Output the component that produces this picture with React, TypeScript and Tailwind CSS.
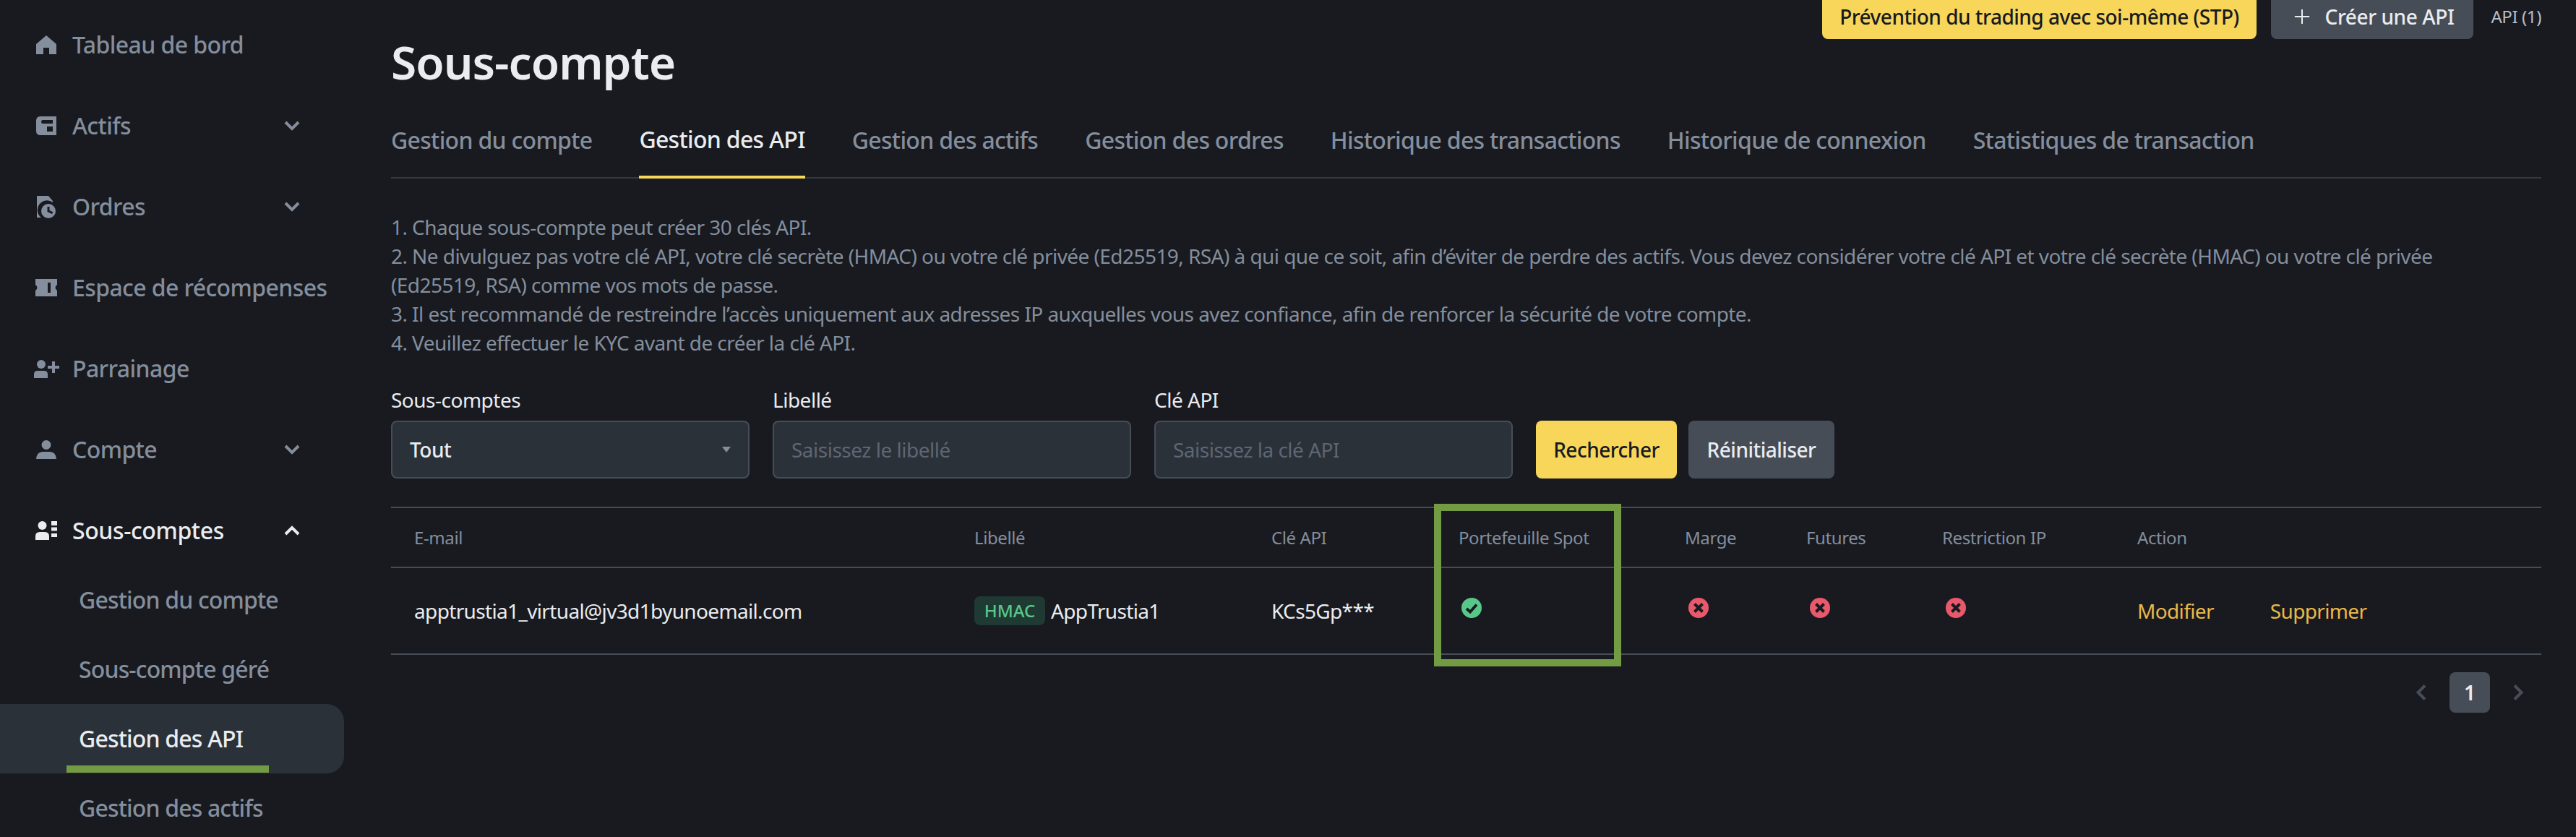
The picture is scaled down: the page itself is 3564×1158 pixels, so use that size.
import React from "react";
import { Plus } from "lucide-react";

const font = "font-['Noto_Sans',sans-serif]";

function HomeIcon() {
  return (
    <svg viewBox="0 0 28 26" className="w-7 h-[26px]" fill="currentColor">
      <path d="M14 0 L28 12 V26 H18 V17 H10 V26 H0 V12 Z" />
    </svg>
  );
}

function WalletIcon() {
  return (
    <svg viewBox="0 0 28 26" className="w-7 h-[26px]" fill="currentColor">
      <path
        fillRule="evenodd"
        d="M6 0 H28 V26 H6 Q0 26 0 20 V6 Q0 0 6 0 Z M9 5 Q7 5 7 7.5 Q7 10 9 10 H23 V5 Z M15 14 V21 H23 V14 Z"
      />
    </svg>
  );
}

function OrdersIcon() {
  return (
    <svg viewBox="0 0 27 31" className="w-[27px] h-[31px]" fill="currentColor">
      <path d="M0 0 H16 L22 7 V9 A13 13 0 0 0 6 30 H0 Z" />
      <path
        fillRule="evenodd"
        d="M16 11 A10 10 0 1 1 16 31 A10 10 0 0 1 16 11 Z M14.5 15 V22 L21 25 L22.5 22.5 L17.5 20 V15 Z"
      />
    </svg>
  );
}

function TicketIcon() {
  return (
    <svg viewBox="0 0 30 24" className="w-[30px] h-6" fill="currentColor">
      <path
        fillRule="evenodd"
        d="M0 0 H30 V8 A4.5 4.5 0 0 0 30 16 V24 H0 V16 A4.5 4.5 0 0 0 0 8 Z M17 5 V19 H21 V5 Z"
      />
    </svg>
  );
}

function ReferralIcon() {
  return (
    <svg viewBox="0 0 35 25" className="w-[35px] h-[25px]" fill="currentColor">
      <circle cx="10" cy="6" r="6" />
      <path d="M0 25 V20 Q0 15 5 15 H14 Q19 15 19 20 V25 Z" />
      <path d="M25 2 H29 V8 H35 V12 H29 V18 H25 V12 H19 V8 H25 Z" />
    </svg>
  );
}

function UserIcon() {
  return (
    <svg viewBox="0 0 28 26" className="w-7 h-[26px]" fill="currentColor">
      <circle cx="14" cy="6.5" r="6.5" />
      <path d="M0 26 Q1 16 9 16 H19 Q27 16 28 26 Z" />
    </svg>
  );
}

function SubAccountIcon() {
  return (
    <svg viewBox="0 0 30 26" className="w-[30px] h-[26px]" fill="currentColor">
      <circle cx="9.5" cy="6" r="6" />
      <path d="M0 26 V21 Q0 15 6 15 H13 Q19 15 19 21 V26 Z" />
      <path d="M22 0 H30 V6 H22 Z M22 8.5 H30 V13.5 H22 Z M22 17 H30 V22 H22 Z" />
    </svg>
  );
}

function Chevron({ up = false }: { up?: boolean }) {
  return (
    <svg viewBox="0 0 22 14" className="w-[22px] h-[14px]" fill="none" stroke="currentColor" strokeWidth="4">
      <path d={up ? "M2 12 L11 3 L20 12" : "M2 2 L11 11 L20 2"} />
    </svg>
  );
}

function CheckBadge() {
  return (
    <svg viewBox="0 0 28 28" className="w-7 h-7">
      <circle cx="14" cy="14" r="14" fill="#58c88a" />
      <path d="M7 15 L12 19.5 L21 9.5" fill="none" stroke="#181a20" strokeWidth="3.8" />
    </svg>
  );
}

function CrossBadge() {
  return (
    <svg viewBox="0 0 28 28" className="w-7 h-7">
      <circle cx="14" cy="14" r="14" fill="#e8596c" />
      <path d="M8.5 8.5 L19.5 19.5 M19.5 8.5 L8.5 19.5" fill="none" stroke="#181a20" strokeWidth="4" />
    </svg>
  );
}

const menu = [
  { label: "Tableau de bord", icon: <HomeIcon />, arrow: false },
  { label: "Actifs", icon: <WalletIcon />, arrow: true },
  { label: "Ordres", icon: <OrdersIcon />, arrow: true },
  { label: "Espace de récompenses", icon: <TicketIcon />, arrow: false },
  { label: "Parrainage", icon: <ReferralIcon />, arrow: false },
  { label: "Compte", icon: <UserIcon />, arrow: true },
];

const subMenu = ["Gestion du compte", "Sous-compte géré", "Gestion des API", "Gestion des actifs"];

const tabs = [
  "Gestion du compte",
  "Gestion des API",
  "Gestion des actifs",
  "Gestion des ordres",
  "Historique des transactions",
  "Historique de connexion",
  "Statistiques de transaction",
];

const columns = ["E-mail", "Libellé", "Clé API", "Portefeuille Spot", "Marge", "Futures", "Restriction IP", "Action"];

function Sidebar() {
  return (
    <aside className="w-[476px] shrink-0 pt-[6px] text-[32px] font-medium">
      {menu.map((item) => (
        <div key={item.label} className="h-[112px] w-[415px] flex items-center text-[#848e9c] tracking-[-0.6px]">
          <span className="ml-11 mr-4 w-10 shrink-0 flex items-center justify-center">{item.icon}</span>
          <span className="whitespace-nowrap">{item.label}</span>
          {item.arrow && (
            <span className="ml-auto flex">
              <Chevron />
            </span>
          )}
        </div>
      ))}
      <div className="h-[112px] w-[415px] flex items-center text-[#eaecef] tracking-[-0.4px]">
        <span className="ml-11 mr-4 w-10 shrink-0 flex items-center justify-center">
          <SubAccountIcon />
        </span>
        <span>Sous-comptes</span>
        <span className="ml-auto flex">
          <Chevron up />
        </span>
      </div>
      <div className="-mt-2 tracking-[-0.85px]">
        {subMenu.map((name) => {
          const active = name === "Gestion des API";
          return (
            <div
              key={name}
              className={
                active
                  ? "relative h-[96px] pl-[109px] flex items-center bg-[#2b3139] rounded-r-3xl text-[#eaecef]"
                  : "h-[96px] pl-[109px] flex items-center text-[#848e9c]"
              }
            >
              {name}
              {active && <span className="absolute left-[92px] bottom-[1px] w-[280px] h-[10px] bg-[#739b44]" />}
            </div>
          );
        })}
      </div>
    </aside>
  );
}

export default function App() {
  return (
    <div className={`${font} relative w-[3564px] h-[1158px] overflow-hidden bg-[#181a20] flex`}>
      <Sidebar />
      <main className="w-[2975px] ml-[65px] -mt-2 relative">
        {/* top actions touch the window edge */}
        <div className="flex items-center justify-end h-[62px] tracking-[-0.4px]">
          <button className="h-[62px] w-[601px] rounded-b-lg bg-[#f7d65a] text-[#181a20] text-[28px] font-medium tracking-[-0.5px]">
            Prévention du trading avec soi-même (STP)
          </button>
          <button className="h-[62px] w-[280px] ml-5 rounded-b-lg bg-[#474d57] text-[#eaecef] text-[28px] font-medium flex items-center justify-center gap-4">
            <Plus size={32} strokeWidth={1.5} />
            Créer une API
          </button>
          <span className="w-[94px] text-right text-[24px] text-[#b7bdc6]">API (1)</span>
        </div>

        <h1 className="mt-[-8px] text-[64px] leading-[80px] font-semibold text-[#eaecef] tracking-[-1px]">Sous-compte</h1>

        <div className="mt-[17px] h-[104px] flex gap-[65px] border-b-2 border-[#333a42] text-[32px] font-medium tracking-[-0.7px]">
          {tabs.map((t) =>
            t === "Gestion des API" ? (
              <div key={t} className="h-[104px] flex items-center text-[#eaecef] border-b-[4px] border-[#f7d65a]">
                {t}
              </div>
            ) : (
              <div key={t} className="h-[102px] flex items-center text-[#848e9c]">
                {t}
              </div>
            ),
          )}
        </div>

        <div className="mt-[47px] pr-[60px] text-[28px] leading-[40px] text-[#848e9c] tracking-[-0.56px]">
          <p>1. Chaque sous-compte peut créer 30 clés API.</p>
          <p>
            2. Ne divulguez pas votre clé API, votre clé secrète (HMAC) ou votre clé privée (Ed25519, RSA) à qui que ce soit, afin d’éviter de perdre des actifs. Vous devez considérer votre clé API et votre clé secrète (HMAC) ou votre clé privée (Ed25519, RSA) comme vos mots de passe.
          </p>
          <p>3. Il est recommandé de restreindre l’accès uniquement aux adresses IP auxquelles vous avez confiance, afin de renforcer la sécurité de votre compte.</p>
          <p>4. Veuillez effectuer le KYC avant de créer la clé API.</p>
        </div>

        <div className="mt-[39px] flex items-end gap-8 text-[28px] tracking-[-0.5px]">
          <label className="block w-[496px]">
            <span className="block leading-[40px] mb-[9px] text-[#eaecef]">Sous-comptes</span>
            <div className="h-20 px-6 rounded-lg border-2 border-[#474d57] bg-[#2b3139] flex items-center justify-between font-medium text-[#eaecef]">
              Tout
              <span className="w-0 h-0 border-x-[6px] border-x-transparent border-t-[8px] border-t-[#848e9c]" />
            </div>
          </label>
          <label className="block w-[496px]">
            <span className="block leading-[40px] mb-[9px] text-[#eaecef]">Libellé</span>
            <div className="h-20 px-6 rounded-lg border-2 border-[#474d57] bg-[#2b3139] flex items-center text-[#5e6673]">
              Saisissez le libellé
            </div>
          </label>
          <label className="block w-[496px]">
            <span className="block leading-[40px] mb-[9px] text-[#eaecef]">Clé API</span>
            <div className="h-20 px-6 rounded-lg border-2 border-[#474d57] bg-[#2b3139] flex items-center text-[#5e6673]">
              Saisissez la clé API
            </div>
          </label>
          <div className="flex gap-4">
            <button className="h-20 w-[195px] rounded-lg bg-[#f7d65a] text-[#181a20] font-medium">Rechercher</button>
            <button className="h-20 w-[202px] rounded-lg bg-[#474d57] text-[#eaecef] font-medium">Réinitialiser</button>
          </div>
        </div>

        <div className="mt-[39px] border-t-2 border-[#474d57]">
          <div className="h-[83px] pl-8 grid grid-cols-[775px_411px_259px_313px_168px_188px_270px_1fr] items-center border-b-2 border-[#474d57] text-[24px] text-[#848e9c] tracking-[-0.4px]">
            {columns.map((c) => (
              <div key={c}>{c}</div>
            ))}
          </div>
          <div className="h-[120px] pl-8 grid grid-cols-[775px_411px_259px_313px_168px_188px_270px_1fr] items-center border-b-2 border-[#474d57] text-[28px] text-[#eaecef] tracking-[-0.65px]">
            <div>apptrustia1_virtual@jv3d1byunoemail.com</div>
            <div className="flex items-center gap-2">
              <span className="h-10 w-[98px] rounded-lg bg-[#1f3a33] text-[#58c88a] text-[24px] font-medium flex items-center justify-center tracking-normal">HMAC</span>
              AppTrustia1
            </div>
            <div>KCs5Gp***</div>
            <div className="pl-1 -mt-2"><CheckBadge /></div>
            <div className="pl-[5px] -mt-2"><CrossBadge /></div>
            <div className="pl-[5px] -mt-2"><CrossBadge /></div>
            <div className="pl-[5px] -mt-2"><CrossBadge /></div>
            <div className="flex gap-[78px] text-[#e9b949]">
              <span>Modifier</span>
              <span>Supprimer</span>
            </div>
          </div>
        </div>

        <div className="mt-[24px] flex items-center justify-end pr-[24px] text-[#474d57]">
          <svg viewBox="0 0 15 22" className="w-[15px] h-[22px]" fill="none" stroke="currentColor" strokeWidth="4"><path d="M13 1.5 L3.5 11 L13 20.5" /></svg>
          <span className="w-14 h-14 mx-8 rounded-lg bg-[#474d57] text-[#eaecef] text-[28px] font-semibold flex items-center justify-center">1</span>
          <svg viewBox="0 0 15 22" className="w-[15px] h-[22px]" fill="none" stroke="currentColor" strokeWidth="4"><path d="M2 1.5 L11.5 11 L2 20.5" /></svg>
        </div>
      </main>

      {/* green annotation frame around the Spot column */}
      <div className="absolute left-[1984px] top-[697px] w-[259px] h-[225px] border-[10px] border-[#739b44]" />
    </div>
  );
}
